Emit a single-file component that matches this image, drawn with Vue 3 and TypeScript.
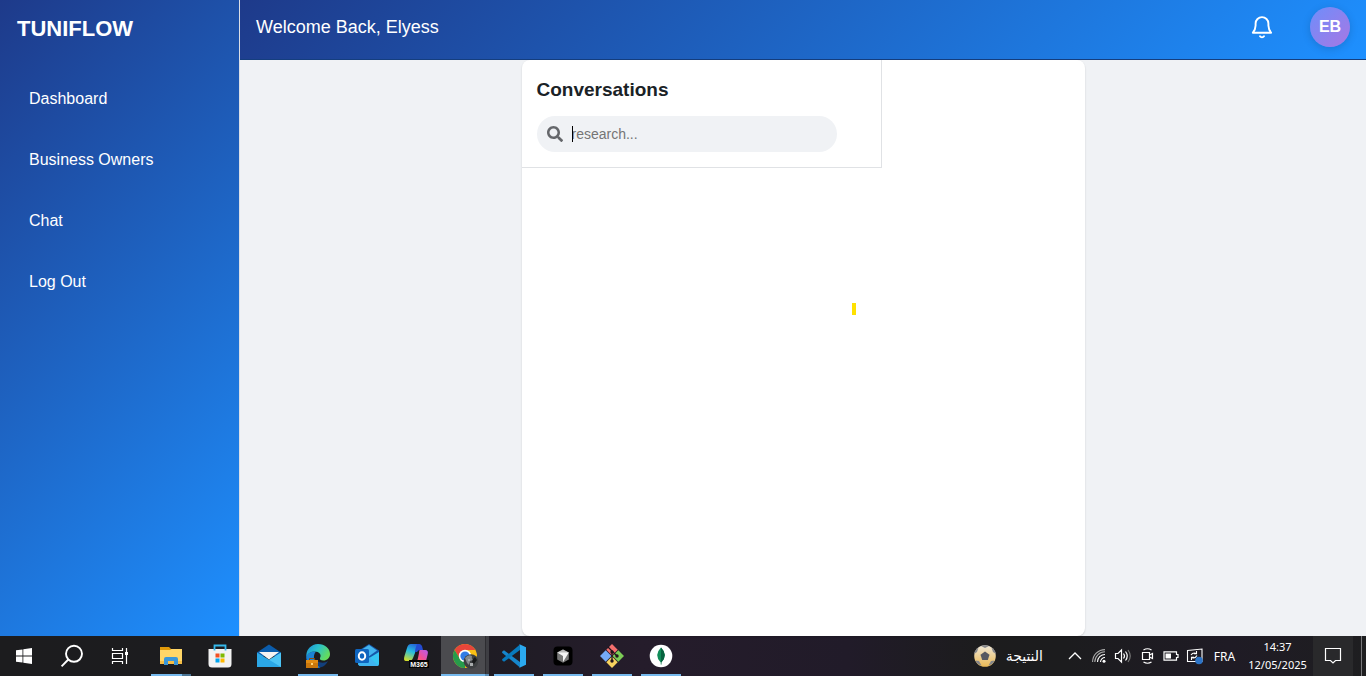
<script setup lang="ts">
import { ref } from 'vue'

const links: string[] = ['Dashboard', 'Business Owners', 'Chat', 'Log Out']
const query = ref('')
</script>

<template>
  <div class="screen">
    <div class="app">
      <aside class="sidebar">
        <h1 class="brand">TUNIFLOW</h1>
        <nav class="nav">
          <a v-for="link in links" :key="link" href="#">{{ link }}</a>
        </nav>
      </aside>

      <div class="content">
        <header class="topbar">
          <p class="welcome">Welcome Back, Elyess</p>
          <div class="actions">
            <button class="bell" type="button" aria-label="Notifications">
              <svg width="24" height="24" viewBox="0 0 24 24" fill="none" stroke="#fff" stroke-width="1.9" stroke-linecap="round" stroke-linejoin="round">
                <path d="M2.9 17.7H21.1C19.4 15.6 18.5 14 18.4 10.5V8.5A6.4 6.4 0 0 0 5.6 8.5V10.5C5.5 14 4.6 15.6 2.9 17.7Z" />
                <path d="M10 21.3A2.4 2.4 0 0 0 14 21.3" />
              </svg>
            </button>
            <button class="avatar" type="button" aria-label="Account">EB</button>
          </div>
        </header>

        <main class="main">
          <section class="card">
            <div class="conversations">
              <h2>Conversations</h2>
              <label class="search">
                <svg width="16" height="16" viewBox="0 0 512 512" fill="#65676b" aria-hidden="true">
                  <path d="M505 442.700 405.300 343c-4.500-4.500-10.600-7-17-7H372c27.600-35.300 44-79.700 44-128C416 93.100 322.900 0 208 0S0 93.100 0 208s93.100 208 208 208c48.300 0 92.700-16.400 128-44v16.300c0 6.400 2.500 12.500 7 17l99.700 99.700c9.400 9.400 24.600 9.400 33.900 0l28.300-28.300c9.400-9.400 9.400-24.600.1-34zM208 336c-70.700 0-128-57.200-128-128 0-70.700 57.200-128 128-128 70.700 0 128 57.200 128 128 0 70.700-57.200 128-128 128z" />
                </svg>
                <span class="field">
                  <input v-model="query" type="text" placeholder="research..." aria-label="Search conversations" />
                  <span class="caret"></span>
                </span>
              </label>
            </div>
            <span class="marker"></span>
          </section>
        </main>
      </div>
    </div>

    <footer class="taskbar">
      <div class="system">
        <button type="button" aria-label="Start">
          <svg width="16" height="16" viewBox="0 0 16 16" fill="#fff"><path d="M0 2.300 6.500 1.400V7.600H0ZM7.300 1.300 16 0V7.600H7.300ZM0 8.400H6.500V14.600L0 13.700ZM7.300 8.400H16V16L7.300 14.700Z" /></svg>
        </button>
        <button type="button" aria-label="Search">
          <svg width="24" height="24" viewBox="0 0 24 24" fill="none" stroke="#fff" stroke-width="1.9"><circle cx="14" cy="9.800" r="8" /><path d="M8.300 15.500 1.600 22.300" /></svg>
        </button>
        <button type="button" aria-label="Task view">
          <svg width="18" height="18" viewBox="0 0 18 18" fill="none" stroke="#fff" stroke-width="1.200"><path d="M1.500 1V3.500H11.500V1M1.500 17V14.500H11.500V17M1.500 6.500H11.500V11.500H1.500ZM15.500 1V17" /><path d="M14 5H17V8H14Z" fill="#fff" stroke="none" /></svg>
        </button>
      </div>

      <div class="apps">
        <button class="open stacked" type="button" aria-label="File Explorer">
          <svg width="24" height="24" viewBox="0 0 24 24"><path d="M1 3H10L12 5H22V9H1Z" fill="#e09a0a" /><path d="M1 6H11L12.500 5H23V20H1Z" fill="#ffd667" /><path d="M1 17H23V20H1Z" fill="#f5bd45" /><path d="M5 21V15Q5 13 7 13H17Q19 13 19 15V21H15V17H9V21Z" fill="#3996d8" /></svg>
        </button>
        <button type="button" aria-label="Microsoft Store">
          <svg width="24" height="24" viewBox="0 0 24 24"><path d="M.5 5H23.500V20Q23.500 23.500 20 23.500H4Q.5 23.500 .5 20Z" fill="#f2f2f2" /><path d="M6.500 6.500V1.500H17.500V6.500" fill="none" stroke="#35b8ea" stroke-width="1.800" /><path d="M7.500 9.500H11.500V13.500H7.500Z" fill="#f25022" /><path d="M12.500 9.500H16.500V13.500H12.500Z" fill="#7fba00" /><path d="M7.500 14.500H11.500V18.500H7.500Z" fill="#00a4ef" /><path d="M12.500 14.500H16.500V18.500H12.500Z" fill="#ffb900" /></svg>
        </button>
        <button type="button" aria-label="Mail">
          <svg width="24" height="24" viewBox="0 0 24 24"><path d="M0 8.500 12 .5 24 8.500V12H0Z" fill="#0b5cab" /><path d="M2 8H22L12 15.500Z" fill="#f6f3f2" /><path d="M24 8.500V23H0Z" fill="#4cc4f5" /><path d="M0 8.500 24 23H0Z" fill="#2ba7e6" /></svg>
        </button>
        <button class="open" type="button" aria-label="Microsoft Edge">
          <svg width="26" height="26" viewBox="0 0 26 26">
            <defs><linearGradient id="edge" x1="0" y1="0" x2="1" y2=".5"><stop offset="0" stop-color="#1b8dda" /><stop offset=".5" stop-color="#2bc2c9" /><stop offset="1" stop-color="#64dc5c" /></linearGradient></defs>
            <path d="M1.200 13C2 9.500 6 7 10 8C7 11 8 15.500 12 18C16 20.500 20 20 23 18C20.500 23 16 25 12.500 25C6 25 1 19.500 1.200 13Z" fill="#123f7c" />
            <path d="M11 8.500C7 13 9 20 15 24.500C8 26 2 21 1.300 15C1 11 6 8 11 8.500Z" fill="#1c83d3" />
            <path d="M1.300 14A11.700 12 0 0 1 13 1C20 1 25 5.500 25 11C25 15 22 17.500 18.500 17.500C15.500 17.500 14.500 16.500 15 15C17 11.500 14 8.500 10 8.500C5.500 8.500 2.500 10.500 1.300 14Z" fill="url(#edge)" />
            <path d="M1 17H13V25H1Z" fill="#c9770c" /><path d="M1 17H13V20H1Z" fill="#e18b12" /><path d="M4.500 17V15.500H9.500V17" fill="none" stroke="#8d4b08" /><path d="M6 20H8V22H6Z" fill="#ffd477" />
          </svg>
        </button>
        <button type="button" aria-label="Outlook">
          <svg width="26" height="26" viewBox="0 0 26 26"><path d="M4 8 15 1 25 7.500V21Q25 23 23 23H7Q4 23 4 20Z" fill="#1657a8" /><path d="M7 7 15 2 23 7.500 14 14Z" fill="#43b4ee" /><path d="M25 9V21Q25 23 23 23H7Q5 23 4 21L16 14.500Z" fill="#35c5f2" /><path d="M4 20 16 14.500 24 22.500Q23 23 22 23H7Q4 23 4 20Z" fill="#3fb4f0" /><rect x="1" y="6" width="14" height="14" rx="1.500" fill="#0f65bf" /><ellipse cx="8" cy="13" rx="3.200" ry="3.700" fill="none" stroke="#fff" stroke-width="2" /></svg>
        </button>
        <button type="button" aria-label="Microsoft 365">
          <svg width="26" height="26" viewBox="0 0 26 26">
            <defs><linearGradient id="m365a" x1=".6" y1="0" x2=".2" y2="1"><stop offset="0" stop-color="#2563d9" /><stop offset=".45" stop-color="#27bde0" /><stop offset="1" stop-color="#d6df28" /></linearGradient><linearGradient id="m365b" x1="0" y1="1" x2="1" y2="0"><stop offset="0" stop-color="#ff8b45" /><stop offset=".5" stop-color="#f24f94" /><stop offset="1" stop-color="#b45cf0" /></linearGradient></defs>
            <path d="M8 1H15Q18 1 19 6H15Q13 6 12 10L10 15Q9 18 6 18H3Q0 18 1.500 13L4 5Q5 1 8 1Z" fill="url(#m365a)" /><path d="M14 1H16Q18 1 19 3L20 7H17Q15 7 14 9L12 9Q12 6 14 1Z" fill="#244bd1" /><path d="M17 7H22Q26 7 24.500 12L23 18Q22 21 18 21H11Q14 20 15 15L16 10Q16 7 17 7Z" fill="url(#m365b)" />
            <rect x="6" y="17" width="20" height="8" fill="#050505" /><text x="16" y="24" class="tiny">M365</text>
          </svg>
        </button>
        <button class="open active" type="button" aria-label="Google Chrome">
          <svg width="28" height="26" viewBox="-1 0 28 26"><circle cx="13" cy="13" r="12" fill="#f9bf15" /><path d="M2.600 7A12 12 0 0 1 23.400 7H13L7.800 16Z" fill="#e6453a" /><path d="M2.600 7 8 16 13 19 13 25A12 12 0 0 1 2.600 7Z" fill="#279b4b" /><circle cx="13" cy="13" r="6.200" fill="#fff" /><circle cx="13" cy="13" r="4.600" fill="#327ce5" /><circle cx="19" cy="18.500" r="7.300" fill="#3d4042" /><path d="M13 15Q16 11 20 13Q19 15 21 17L18 18L17 22L15 20Z" fill="#85898b" /><path d="M21 16 23 14 25 17 22 21 20 19Z" fill="#17191a" /><path d="M16 16H18V18H16ZM18 20H21V23H18Z" fill="#a8acad" /></svg>
        </button>
        <button class="open" type="button" aria-label="Visual Studio Code">
          <svg width="24" height="24" viewBox="0 0 24 24"><path d="M.3 7.500 2 6.200 18 18V23.500L.4 9Q-.2 8.200 .3 7.500Z" fill="#1686cc" /><path d="M.3 16.500 2 17.800 18 6V.5L.4 15Q-.2 15.800 .3 16.500Z" fill="#087abd" /><path d="M17 0 24 3.300V20.700L17 24Q18 23.500 18 22V2Q18 .5 17 0Z" fill="#2ba9ef" /></svg>
        </button>
        <button class="open" type="button" aria-label="Cursor">
          <svg width="20" height="20" viewBox="0 0 20 20"><rect x=".5" y=".5" width="19" height="19" rx="4" fill="#000" /><path d="M10 3.500 15.800 6.500V13.500L10 16.800 4.200 13.500V6.500Z" fill="#777" /><path d="M4.200 6.500 10 3.500 15.800 6.500 10 8Z" fill="#bbb" /><path d="M4.200 6.500H15.800L10 16V10Z" fill="#f5f5f5" /></svg>
        </button>
        <button class="open" type="button" aria-label="Git">
          <svg width="26" height="26" viewBox="0 0 26 26"><path d="M13 1 18.700 6.700 13 12.400 7.300 6.700Z" fill="#f46f6d" /><path d="M6.700 7.300 12.400 13 6.700 18.700 1 13Z" fill="#75aaf7" /><path d="M19.300 7.300 25 13 19.300 18.700 13.600 13Z" fill="#7ccc56" /><path d="M13 13.600 18.700 19.300 13 25 7.300 19.300Z" fill="#f8d35f" /><path d="M9 4 13 8V19M13 8 18 13" fill="none" stroke="#20131c" stroke-width="1.300" /><circle cx="13" cy="9" r="1.700" fill="#20131c" /><circle cx="18" cy="13" r="1.700" fill="#20131c" /><circle cx="13" cy="18" r="1.700" fill="#20131c" /></svg>
        </button>
        <button class="open" type="button" aria-label="MongoDB Compass">
          <svg width="24" height="24" viewBox="0 0 24 24"><circle cx="12" cy="12" r="11.300" fill="#fff" /><path d="M12 3.500Q19.500 11 12.300 18.500V20.500H11.700V18.500Q4.500 11 12 3.500Z" fill="#118c59" /><path d="M12 3.500Q19.500 11 12.300 18.500V20.500H12Z" fill="#07623f" /></svg>
        </button>
      </div>

      <div class="tray">
        <button class="news" type="button">
          <svg width="22" height="22" viewBox="0 0 22 22"><defs><linearGradient id="ball" x1="0" y1="0" x2="0" y2="1"><stop offset="0" stop-color="#efe8d8" /><stop offset="1" stop-color="#eab954" /></linearGradient></defs><circle cx="11" cy="11" r="10.800" fill="url(#ball)" /><path d="M11 6.500 15.500 9.700 13.800 15H8.200L6.500 9.700Z" fill="#555861" /><path d="M7 1 11 3 15 1Q11-.5 7 1ZM0 9 3 7 4.500 2.500Q.5 5 0 9ZM22 9 19 7 17.500 2.500Q21.500 5 22 9ZM1.500 15.500 5 16 7.500 20.500Q3 19.500 1.500 15.500ZM20.500 15.500 17 16 14.500 20.500Q19 19.500 20.500 15.500Z" fill="#85868a" /></svg>
          <span lang="ar" dir="rtl">النتيجة</span>
        </button>
        <div class="status">
          <button type="button" aria-label="Show hidden icons"><svg width="14" height="14" viewBox="0 0 14 14" fill="none" stroke="#fff" stroke-width="1.300"><path d="M1 10 7 4 13 10" /></svg></button>
          <button type="button" aria-label="Network"><svg width="14" height="14" viewBox="0 0 14 14" fill="none" stroke="#fff" stroke-width="1.100"><path d="M8.500 13A4.500 4.500 0 0 1 13 8.500M5.500 13A7.500 7.500 0 0 1 13 5.500" /><path d="M2.800 13A10.200 10.200 0 0 1 13 2.800M.6 13A12.400 12.400 0 0 1 13 .6" stroke="#aaa" /><circle cx="12" cy="12.200" r="1.500" fill="#fff" stroke="none" /></svg></button>
          <button type="button" aria-label="Volume"><svg width="18" height="16" viewBox="0 0 18 16" fill="none" stroke="#fff" stroke-width="1.200"><path d="M1.500 5.500H4L7.500 2V14L4 10.500H1.500ZM9.500 5.500Q11.500 8 9.500 10.500M11.500 3.500Q15 8 11.500 12.500" /><path d="M14 2Q18.500 8 14 14" stroke="#777" /></svg></button>
          <button type="button" aria-label="Camera"><svg width="14" height="16" viewBox="0 0 14 16" fill="none" stroke="#fff" stroke-width="1.200"><path d="M2.500 4.500H9.500V11.500H2.500ZM9.500 7 12.500 5.500V10.500L9.500 9M3.500 2Q7.500-.5 11.500 2M3.500 14Q7.500 16.500 11.500 14" /></svg></button>
          <button type="button" aria-label="Battery"><svg width="16" height="10" viewBox="0 0 16 10" fill="none" stroke="#fff" stroke-width="1.200"><path d="M1 .8H13.500V3.500H15V6.500H13.500V9.200H1Z" /><path d="M2.500 2.500H8V7.500H2.500Z" fill="#fff" stroke="none" /></svg></button>
          <button type="button" aria-label="Updates"><svg width="18" height="18" viewBox="0 0 18 18" fill="none" stroke="#fff" stroke-width="1.100"><path d="M1.500 3.500 16 2V14.500L1.500 14.500ZM5 8Q7 5 10.500 6.500M10.500 4V6.800H8M11 8.500Q9 12 6 10.500M5.500 13V10.300H8" /><circle cx="13" cy="13.500" r="3.800" fill="#2c73c6" stroke="none" /></svg></button>
        </div>
        <button class="language" type="button">FRA</button>
        <button class="clock" type="button"><time>14:37</time><time>12/05/2025</time></button>
        <button class="center" type="button" aria-label="Action center"><svg width="18" height="18" viewBox="0 0 18 18" fill="none" stroke="#fff" stroke-width="1.200"><path d="M1.500 1.500H16.500V13.500H11.500L9 16L6.500 13.500H1.500Z" /></svg></button>
        <button class="desktop" type="button" aria-label="Show desktop"></button>
      </div>
    </footer>
  </div>
</template>

<style>
body {
  margin: 0;
}
</style>

<style scoped>
.screen {
  min-height: 100vh;
  display: flex;
  flex-direction: column;
  font-family: "Liberation Sans", Arial, sans-serif;
  color: #1a2226;
}

.screen *,
.screen {
  box-sizing: border-box;
}

button {
  border: 0;
  padding: 0;
  background: none;
  color: inherit;
  font: inherit;
  cursor: pointer;
}

svg {
  display: block;
  flex: none;
}

.app {
  flex: 1;
  display: grid;
  grid-template-columns: 240px minmax(0, 1fr);
}

.sidebar {
  border-right: 1px solid #dcdfe6;
  background: linear-gradient(135deg, #1e3a8a, #1e90ff) padding-box;
  color: #fff;
}

.brand {
  margin: 0;
  padding: 17px 17px 16px;
  font-size: 22px;
  line-height: 24px;
}

.nav {
  display: flex;
  flex-direction: column;
  gap: 17px;
  padding: 20px 17px;
}

.nav a {
  padding: 12px;
  line-height: 20px;
  font-size: 16px;
  color: #fff;
  text-decoration: none;
}

.content {
  display: flex;
  flex-direction: column;
}

.topbar {
  display: flex;
  align-items: center;
  justify-content: space-between;
  height: 60px;
  padding: 0 16px;
  border-bottom: 1px solid #153e7e;
  background: linear-gradient(135deg, #1e3a8a, #1e90ff);
  color: #fff;
}

.welcome {
  margin: 0;
  padding-bottom: 6px;
  font-size: 18px;
  line-height: 24px;
}

.actions {
  display: flex;
  align-items: center;
  gap: 36px;
  padding-bottom: 6px;
}

.avatar {
  width: 40px;
  height: 40px;
  border-radius: 50%;
  background: linear-gradient(135deg, #6e8efb, #a777e3);
  box-shadow: 0 2px 8px rgba(0, 0, 0, 0.15);
  font-size: 16px;
  font-weight: 700;
}

.main {
  flex: 1;
  display: flex;
  justify-content: center;
  background: #f0f2f5;
}

.card {
  position: relative;
  width: 50%;
  border-radius: 8px;
  background: #fff;
  box-shadow: 0 1px 2px rgba(0, 0, 0, 0.15);
}

.conversations {
  width: 360px;
  max-width: 100%;
  padding: 16px 15px 15px;
  border-right: 1px solid #e0e2e5;
  border-bottom: 1px solid #e0e2e5;
}

.conversations h2 {
  margin: 0 0 12px;
  font-size: 19px;
  line-height: 28px;
}

.search {
  display: flex;
  align-items: center;
  gap: 9px;
  width: 300px;
  height: 36px;
  padding: 0 10px;
  border-radius: 18px;
  background: #f0f2f5;
}

.field {
  position: relative;
  flex: 1;
  display: flex;
}

.field input {
  width: 100%;
  padding: 0;
  border: 0;
  outline: 0;
  background: none;
  font: 14px/18px "Liberation Sans", Arial, sans-serif;
}

.field input::placeholder {
  color: #757575;
}

.caret {
  position: absolute;
  left: 0;
  top: 1px;
  width: 1px;
  height: 16px;
  background: #000;
}

.marker {
  position: absolute;
  left: 330px;
  top: 243px;
  width: 4px;
  height: 12px;
  background: #ffe100;
}

.taskbar {
  display: flex;
  justify-content: space-between;
  height: 40px;
  background: linear-gradient(90deg, #1c1c1e 0%, #1c1c20 30%, #251c2b 47%, #211b29 62%, #1c1c1d 72%, #1c1c1e 78%, #1f1b25 90%, #1e1e20 100%);
  color: #fff;
  font-family: "Noto Sans", "Open Sans", sans-serif;
  font-size: 12px;
}

.taskbar button {
  display: flex;
  align-items: center;
  justify-content: center;
}

.system,
.apps,
.tray,
.status {
  display: flex;
}

.apps {
  gap: 1px;
  margin-left: 3px;
  margin-right: auto;
}

.system button,
.apps button {
  width: 48px;
  height: 40px;
}

.apps .open {
  background: linear-gradient(#76b9ed, #76b9ed) center bottom / 40px 2px no-repeat;
}

.apps .stacked {
  background:
    linear-gradient(90deg, #76b9ed 31px, #4b7595 31px) center bottom / 40px 2px no-repeat;
}

.apps .active {
  background:
    linear-gradient(90deg, #76b9ed 44px, #5d8fb8 44px) center bottom / 100% 2px no-repeat,
    linear-gradient(90deg, #4b4b4f 44px, #2d2d31 44px, #2d2d31 45px, #3e3e43 45px);
}

.tiny {
  fill: #fff;
  font: 700 7px "Liberation Sans", sans-serif;
  text-anchor: middle;
}

.news {
  gap: 10px;
  margin-right: 20px;
}

.news span {
  font-family: "DejaVu Sans", sans-serif;
  font-size: 14px;
}

.status button {
  width: 24px;
}

.language {
  width: 35px;
}

.taskbar .clock {
  width: 71px;
  flex-direction: column;
  font-size: 11px;
  line-height: 18px;
}

.center {
  width: 40px;
  background: #29292b;
}

.desktop {
  width: 5px;
  margin-left: 8px;
  border-left: 1px solid #77777a;
}
</style>
